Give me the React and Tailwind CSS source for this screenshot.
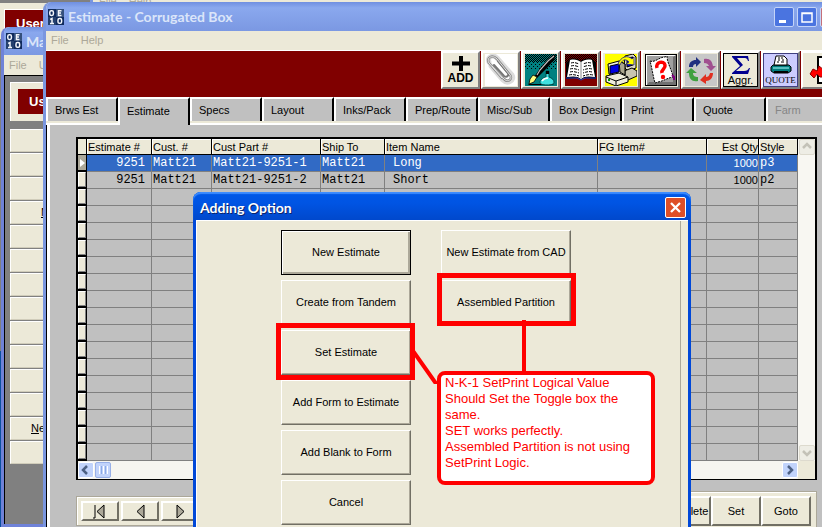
import React from "react";

const TABS = ["Brws Est", "Estimate", "Specs", "Layout", "Inks/Pack", "Prep/Route", "Misc/Sub", "Box Design", "Print", "Quote", "Farm"];

const COLUMNS = ["Estimate #", "Cust. #", "Cust Part #", "Ship To", "Item Name", "FG Item#", "Est Qty", "Style"];

const ROWS = [
  ["9251", "Matt21", "Matt21-9251-1", "Matt21", "Long", "", "1000", "p3"],
  ["9251", "Matt21", "Matt21-9251-2", "Matt21", "Short", "", "1000", "p2"],
];

const EMPTY_ROWS = Array.from({ length: 16 }, (_, i) => i);

function AppIcon() {
  return (
    <svg width="16" height="16" viewBox="0 0 16 16" className="shrink-0">
      <rect width="16" height="16" fill="#0f2a5c" />
      <rect x="8" width="8" height="8" fill="#35507c" />
      <rect y="8" width="8" height="8" fill="#24406e" />
      <g fill="none" stroke="#f4f6fa" strokeWidth="1.500">
        <rect x="1.800" y="1.800" width="3.600" height="4.600" rx="1.400" />
        <path d="M13.500 1.800h-3v4.600h3M10.500 4h2.500" />
        <path d="M2.200 10.500l1.800-1v5M2 14.400h4" />
        <rect x="10" y="9.600" width="3.600" height="4.700" rx="1.400" />
      </g>
    </svg>
  );
}

function ClipIcon() {
  return (
    <svg width="32" height="32" viewBox="0 0 32 32" className="bg-white">
      <g fill="none" strokeLinecap="round" strokeLinejoin="round">
        <path d="M6 12L18 26c5 5 12 0 9-5L12 4C8 0 2 3 4 8" stroke="#dcdcdc" strokeWidth="5" />
        <path d="M7 12l12 13c4 4 9 0 6-4L12 5C7 0 1 4 4 9l13 15" stroke="#8a8a8a" strokeWidth="2.500" />
        <path d="M13 7l9 11c3 3 0 6-3 4L9 11" stroke="#777" strokeWidth="2" />
        <path d="M7 12l12 13c4 4 9 0 6-4L12 5C7 0 1 4 4 9l13 15" stroke="#e4e4e4" strokeWidth="1" />
      </g>
    </svg>
  );
}

function PenIcon() {
  return (
    <svg width="32" height="32" viewBox="0 0 32 32">
      <defs>
        <pattern id="penDots" width="2" height="2" patternUnits="userSpaceOnUse">
          <rect width="1" height="1" fill="#000" />
          <rect x="1" y="1" width="1" height="1" fill="#000" />
        </pattern>
        <pattern id="penSparse" width="4" height="4" patternUnits="userSpaceOnUse">
          <rect width="1" height="1" fill="#000" />
          <rect x="2" y="2" width="1" height="1" fill="#000" />
        </pattern>
      </defs>
      <rect width="32" height="32" fill="#008080" />
      <rect width="32" height="8" fill="url(#penDots)" />
      <rect y="8" width="32" height="7" fill="url(#penSparse)" />
      <path d="M3 30h26l-2 1H4z" fill="#000" />
      <path d="M31 0L24 4 16 13 9 23l3 1L22 14l7-8z" fill="#000" />
      <path d="M29 2L23 7 15 16l-3 5" fill="none" stroke="#c0c0c0" strokeWidth="1.200" />
      <path d="M8 21l4 2-3 5-5 2 1-5z" fill="#ffff80" stroke="#000" strokeWidth="0.800" />
      <path d="M21 17h3v6c3 1 5 3 5 5s-2 3-7 3-7-1-7-3 3-4 6-5z" fill="#40e0e0" stroke="#004c4c" />
      <path d="M17 27c2-3 4-3 6-3" stroke="#fff" fill="none" strokeWidth="1.500" />
      <path d="M21 17h3v3h-3z" fill="#000" />
    </svg>
  );
}

function BookIcon() {
  return (
    <svg width="32" height="32" viewBox="0 0 32 32">
      <defs>
        <pattern id="bookDots" width="2" height="2" patternUnits="userSpaceOnUse">
          <rect width="1" height="1" fill="#000" />
          <rect x="1" y="1" width="1" height="1" fill="#000" />
        </pattern>
      </defs>
      <rect width="32" height="32" fill="#800000" />
      <rect width="32" height="9" fill="url(#bookDots)" />
      <path d="M1 25V9l4-4c5-1 8 0 11 2 3-2 6-3 11-2l4 4v16l-12-1-3 2-3-2z" fill="#000" />
      <path d="M1 24h11l4 2 4-2h11" stroke="#2040c0" fill="none" />
      <path d="M5 6c5-1 8 0 11 2 3-2 6-3 11-2l3 17c-6-1-11-1-14 2-3-3-8-3-14-2z" fill="#fff" />
      <path d="M16 8v16" stroke="#888" />
      <path
        d="M6 9c3-1 6 0 8 1M6 12c3-1 6 0 8 1M5 15c3-1 6 0 9 1M5 18c3-1 6 0 9 1M4 21c4-1 7 0 10 1M26 9c-3-1-6 0-8 1M26 12c-3-1-6 0-8 1M27 15c-3-1-6 0-9 1M27 18c-3-1-6 0-9 1M28 21c-4-1-7 0-10 1"
        fill="none"
        stroke="#000"
        strokeDasharray="3 1"
      />
    </svg>
  );
}

function ComputersIcon() {
  return (
    <svg width="32" height="32" viewBox="0 0 32 32">
      <rect width="32" height="32" fill="#ffff00" />
      <g stroke="#000">
        <path d="M20 2l8-2 3 3v11l-8 3-4-4z" fill="#dedbc8" />
        <path d="M22 4l6-1v8l-6 2z" fill="#0000e0" />
        <path d="M19 17l8-3 5 3v5l-9 4-5-3z" fill="#c8c4b0" />
        <path d="M3 10l11-3 6 3v11l-10 3-6-4z" fill="#f0eddc" />
        <path d="M5 12l9-2v8l-9 2z" fill="#0000e0" />
        <path d="M14 7l6 3v11l-5-3z" fill="#aaa58e" />
        <path d="M1 22l13-3 9 4v5l-12 4-10-4z" fill="#f0eddc" />
        <path d="M1 23l10 4 12-4M11 27v5" fill="none" />
      </g>
      <path d="M13 10C16 2 23 1 27 5l2-2v8l-8-1 3-2c-4-4-7-2-9 3z" fill="#ffff00" stroke="#202080" strokeWidth="0.800" />
      <rect x="3" y="25" width="2" height="2" fill="#00a000" />
    </svg>
  );
}

function HelpNoteIcon() {
  return (
    <svg width="32" height="32" viewBox="0 0 32 32">
      <rect width="32" height="32" fill="#000" />
      <path d="M1 1h30v30H1z" fill="#fff" />
      <path d="M2 2h29v29H2z" fill="#a0a0a0" />
      <path d="M2 31l2-3h24V3l3-2v30z" fill="#707070" />
      <path d="M5 7c5 2 9-4 15-4l2-1c0 7 5 14 6 21-6 1-9 4-15 5l-3 1C8 22 7 14 5 7z" fill="#fff" stroke="#000" strokeDasharray="2 1" />
      <path d="M27 21l2 2v3" stroke="#800080" fill="none" strokeWidth="2" />
      <path d="M12 14c-2-6 7-8 8-3 1 4-4 4-3 8" fill="none" stroke="#ff0000" strokeWidth="3.500" />
      <circle cx="18" cy="23" r="2.200" fill="#ff0000" />
    </svg>
  );
}

function RecycleIcon() {
  return (
    <svg width="32" height="32" viewBox="0 0 32 32">
      <rect width="32" height="32" fill="#c8c8c8" />
      <path d="M4 13c0-5 3-7 7-7V3l5 5-5 5v-3c-2 0-3 1-3 3z" fill="#203080" />
      <path d="M19 5c6-1 8 2 9 7h3l-5 5-5-5h3c-1-2-2-3-5-3z" fill="#a05090" />
      <path d="M28 19c0 5-3 8-7 8v3l-6-4 6-6v3c2 0 3-1 4-4z" fill="#e03020" />
      <path d="M13 27c-6 1-9-2-9-8H1l5-5 6 5H8c0 3 2 4 5 4z" fill="#40a040" />
    </svg>
  );
}

function PrinterIcon() {
  return (
    <svg width="22" height="20" viewBox="0 0 22 20" className="shrink-0">
      <path d="M3 10h16l2 2v4l-3 2H4l-3-2v-4z" fill="#007c7c" stroke="#000" />
      <path d="M4 10L6 1h8l3 3v6z" fill="#fff" stroke="#000" />
      <path d="M8 3h2M11 3h2M8 5h2M12 5h2M7 7h2M11 7h3" stroke="#000" />
      <path d="M3 13h16" stroke="#b0ffff" />
      <path d="M4 16h14v2H4z" fill="#000" />
    </svg>
  );
}

function ExitIcon() {
  return (
    <svg width="32" height="32" viewBox="0 0 32 32">
      <path d="M13 3h16v26H13z" fill="#fff" stroke="#000" strokeWidth="2" />
      <path d="M17 6h10v22H17z" fill="#8b5a2b" />
      <path d="M5 20l3-5 4 2 2-5 5 4v7h-4l-3-3-3 4z" fill="#ff0000" stroke="#900000" />
    </svg>
  );
}

function ToolButton({ label, children }) {
  return (
    <button
      aria-label={label}
      className="flex h-[38px] w-[39px] shrink-0 flex-col items-center justify-center border-2 border-t-white border-r-[#808080] border-b-[#808080] border-l-white bg-[#ece9d8] text-black"
    >
      {children}
    </button>
  );
}

function Toolbar() {
  return (
    <div className="flex h-[46px] items-start justify-end gap-px bg-[#800000] pr-[5px]">
      <ToolButton label="Add">
        <svg width="18" height="15" viewBox="0 0 18 15"><path d="M7 0h4v5.500h7v4h-7V15H7V9.500H0v-4h7z" /></svg>
        <span className="text-[12px] leading-[14px] font-bold">ADD</span>
      </ToolButton>
      <ToolButton label="Attach"><ClipIcon /></ToolButton>
      <ToolButton label="Notes"><PenIcon /></ToolButton>
      <ToolButton label="Book"><BookIcon /></ToolButton>
      <ToolButton label="Copy"><ComputersIcon /></ToolButton>
      <ToolButton label="Help note"><HelpNoteIcon /></ToolButton>
      <ToolButton label="Refresh"><RecycleIcon /></ToolButton>
      <ToolButton label="Aggregate">
        <span className="flex h-[34px] w-[35px] flex-col items-center border border-black pt-[2px]">
          <svg width="18" height="18" viewBox="0 0 18 18" className="shrink-0">
            <path d="M0 0h16l1 5h-1c-1-3-2-3-4-3H5l6 7-7 6h8c3 0 4-1 5-3h1l-2 6H0v-1l8-7-8-9z" fill="#000090" />
          </svg>
          <span className="text-[11px] leading-3">Aggr.</span>
        </span>
      </ToolButton>
      <ToolButton label="Print quote">
        <span className="flex h-[34px] w-[35px] flex-col items-center border border-[#404080] bg-[#ccccff] pt-px">
          <PrinterIcon />
          <span className="font-['Liberation_Serif',serif] text-[9px] leading-[11px]">QUOTE</span>
        </span>
      </ToolButton>
      <ToolButton label="Exit"><ExitIcon /></ToolButton>
    </div>
  );
}

function TabBar() {
  return (
    <div role="tablist" className="flex h-7 items-end border-b-2 border-white bg-[#ece9d8]">
      {TABS.map((tab) =>
        tab === "Estimate" ? (
          <button
            key={tab}
            role="tab"
            aria-selected="true"
            className="-mb-[2px] h-7 w-[72px] shrink-0 border-t-2 border-r-2 border-l-2 border-t-white border-r-black border-l-white bg-[#c0c0c0] pb-[2px] pl-[7px] text-left"
          >
            {tab}
          </button>
        ) : (
          <button
            key={tab}
            role="tab"
            aria-selected="false"
            disabled={tab === "Farm"}
            className="mb-[2px] h-6 w-[72px] shrink-0 overflow-hidden border-t-2 border-r-2 border-l-2 border-t-white border-r-black border-l-white bg-[#c0c0c0] pl-[7px] text-left whitespace-nowrap disabled:text-[#868686]"
          >
            {tab}
          </button>
        )
      )}
    </div>
  );
}

function RowMarker({ current }) {
  return (
    <td className="border-b-2 border-black bg-black p-0 pr-px">
      <div
        className={
          current
            ? "flex h-[15px] items-center justify-center bg-[#aca899]"
            : "h-[15px] border border-t-white border-r-[#808080] border-b-[#808080] border-l-white bg-[#ece9d8]"
        }
      >
        {current && <svg width="5" height="8" viewBox="0 0 5 8"><path d="M0 0l5 4-5 4z" fill="#fff" /></svg>}
      </div>
    </td>
  );
}

const CELL = "h-[17px] overflow-hidden border-r border-b border-[#808080] py-0 font-['Liberation_Mono',monospace] text-[12px] leading-4 whitespace-pre";

function Cell({ value, index }) {
  if (index === 0) return <td className={CELL + " pr-[6px] pl-0 text-right"}>{value}</td>;
  if (index === 4) return <td className={CELL + " pr-0 pl-[8px]"}>{value}</td>;
  if (index === 6)
    return <td className="h-[17px] border-r border-b border-[#808080] p-0 text-right leading-4">{value}</td>;
  return <td className={CELL + " pr-0 pl-px"}>{value}</td>;
}

function ScrollButton({ dir, disabled }) {
  const paths = { up: "M1 6l4-4 4 4", down: "M1 3l4 4 4-4", left: "M6 1L2 5l4 4", right: "M3 1l4 4-4 4" };
  return (
    <button
      aria-label={"Scroll " + dir}
      disabled={disabled}
      className="flex h-4 w-4 shrink-0 items-center justify-center rounded-xs border border-white bg-[#c1d3fb] text-[#4d6185] disabled:border-[#dddace] disabled:bg-[#eeede5] disabled:text-[#c4c2b8]"
    >
      <svg width="10" height="10" viewBox="0 0 10 10"><path d={paths[dir]} fill="none" stroke="currentColor" strokeWidth="2.500" /></svg>
    </button>
  );
}

function EstimateGrid() {
  return (
    <div className="border-2 border-b border-black">
      <div className="flex">
        <div className="min-w-0 flex-1">
          <table className="w-full table-fixed border-separate border-spacing-0">
            <colgroup>
              <col className="w-[9px]" />
              <col className="w-[65px]" />
              <col className="w-[60px]" />
              <col className="w-[109px]" />
              <col className="w-[64px]" />
              <col />
              <col className="w-[109px]" />
              <col className="w-[52px]" />
              <col className="w-[39px]" />
            </colgroup>
            <thead>
              <tr>
                <th aria-label="Row" className="border-r border-b border-black bg-[#ece9d8] p-0" />
                {COLUMNS.map((name) => (
                  <th
                    key={name}
                    className={
                      (name === "Est Qty" ? "text-right" : "text-left") +
                      " h-4 overflow-hidden border-r border-b border-black bg-[#ece9d8] p-0 pl-px text-[11px] leading-[14px] font-normal whitespace-nowrap shadow-[inset_1px_1px_0_#ffffff]"
                    }
                  >
                    {name}
                  </th>
                ))}
              </tr>
            </thead>
            <tbody>
              {ROWS.map((row, r) => (
                <tr key={row[2]} className={r === 0 ? "bg-[#316ac5] text-white" : "text-black"}>
                  <RowMarker current={r === 0} />
                  {row.map((value, i) => <Cell key={i} value={value} index={i} />)}
                </tr>
              ))}
              {EMPTY_ROWS.map((r) => (
                <tr key={r}>
                  <RowMarker />
                  {COLUMNS.map((name) => <td key={name} className="h-[17px] border-r border-b border-[#808080] p-0" />)}
                </tr>
              ))}
            </tbody>
          </table>
          <div className="flex h-[18px] items-center gap-px bg-[#f6f5f0]">
            <ScrollButton dir="left" />
            <div className="flex h-4 w-4 items-center justify-center gap-px rounded-xs border border-[#98b0e8] bg-[#c1d3fb]">
              <i className="h-2 w-px bg-white" />
              <i className="h-2 w-px bg-[#8caae6]" />
              <i className="h-2 w-px bg-white" />
              <i className="h-2 w-px bg-[#8caae6]" />
              <i className="h-2 w-px bg-white" />
            </div>
            <div className="flex-1" />
            <ScrollButton dir="right" />
          </div>
        </div>
        <div className="flex w-[17px] flex-col bg-[#ece9d8]">
          <div className="flex flex-1 flex-col items-center justify-between bg-[#f8f7f2]">
            <ScrollButton dir="up" disabled />
            <ScrollButton dir="down" disabled />
          </div>
          <div className="h-[18px]" />
        </div>
      </div>
    </div>
  );
}

const RAISED = "border-t-white border-r-[#716f64] border-b-[#716f64] border-l-white bg-[#ece9d8]";

function NavButton({ label, children }) {
  return (
    <button aria-label={label} className={"flex h-5 w-[38px] items-center justify-center border-2 " + RAISED}>
      <svg width="14" height="15" viewBox="0 0 14 15" fill="#aca899" stroke="#000">{children}</svg>
    </button>
  );
}

function RecordBar() {
  return (
    <div className="flex items-start justify-between">
      <div className="mt-[5px] flex h-[30px] w-[300px] items-center gap-[2px] border border-[#aca899] bg-[#ece9d8] pl-1 shadow-[inset_1px_1px_0_#ffffff]">
        <NavButton label="First"><path d="M2 1v13M0 14h2" /><path d="M11 1v13L4 7.500z" /></NavButton>
        <NavButton label="Previous"><path d="M11 1v13L4 7.500z" /></NavButton>
        <NavButton label="Next"><path d="M4 1v13l7-6.500z" /></NavButton>
      </div>
      <div className="flex h-[40px] items-start border border-[#aca899] bg-[#ece9d8] pt-1 pr-[5px] shadow-[inset_1px_1px_0_#ffffff]">
        {["Delete", "Set", "Goto"].map((name) => (
          <button key={name} className={"h-[30px] w-[50px] border-2 text-[11px] " + (name === "Delete" ? "pl-[13px] " : "") + RAISED}>{name}</button>
        ))}
      </div>
    </div>
  );
}

const TITLE_FONT = "font-['Lato',sans-serif] text-[14px] font-bold";

function EstimateWindow() {
  return (
    <section className="absolute top-[2px] -right-[23px] -bottom-2 left-[43px] flex flex-col overflow-hidden rounded-t-lg border-l-[3px] border-[#7a96df] bg-[#ece9d8]">
      <header className="flex h-[29px] shrink-0 items-center bg-linear-to-b from-[#6f8fe0] via-[#8aa8ee] via-20% to-[#7b98e2] pr-[5px] pl-[2px]">
        <AppIcon />
        <h1 className={"ml-1 flex-1 text-[#dbe5f9] " + TITLE_FONT}>Estimate - Corrugated Box</h1>
        <div className="flex gap-[3px]">
          <button aria-label="Minimize" className="h-5 w-5 rounded-xs border border-[#c4d4f8] bg-[#4a74e0]">
            <svg width="18" height="18" viewBox="0 0 18 18"><path d="M4 12h7v3H4z" fill="#fff" /></svg>
          </button>
          <button aria-label="Maximize" className="h-5 w-5 rounded-xs border border-[#c4d4f8] bg-[#4a74e0]">
            <svg width="18" height="18" viewBox="0 0 18 18"><path d="M4 5h10v9H4zM4 5.500h10" fill="none" stroke="#fff" strokeWidth="1.500" /></svg>
          </button>
          <button aria-label="Close" className="h-5 w-5 rounded-xs border border-[#c4d4f8] bg-[#c4707a]" />
        </div>
      </header>
      <nav className="flex h-[20px] shrink-0 items-center gap-3 border-b border-white pl-[5px] text-[11px] text-[#aca899]">
        <button>File</button>
        <button>Help</button>
      </nav>
      <Toolbar />
      <TabBar />
      <div className="min-h-0 flex-1 border-l border-black">
        <div className="h-full border-l-[3px] border-white bg-[#c0c0c0] pt-[12px] pr-[28px] pl-[26px]">
          <EstimateGrid />
          <div className="h-[11px]" />
          <RecordBar />
        </div>
      </div>
    </section>
  );
}

function MenuButton({ children }) {
  return (
    <button className="h-[23px] w-full shrink-0 border-t border-b border-l border-t-white border-b-[#d0ccba] border-l-white bg-[#ece9d8] pr-1 text-left">
      {children}
    </button>
  );
}

function MainMenuWindow() {
  return (
    <section className="absolute top-[27px] bottom-0 left-[1px] flex w-[49px] flex-col rounded-tl-lg border-b-[3px] border-l-[3px] border-[#6f82d8] bg-[#ece9d8]">
      <header className="flex h-7 shrink-0 items-center gap-1 rounded-tl-md bg-linear-to-b from-[#6f8fe0] via-[#8aa8ee] via-20% to-[#7b98e2] pl-[2px]">
        <AppIcon />
        <h2 className={"text-[#dbe5f9] " + TITLE_FONT}>Ma</h2>
      </header>
      <nav className="flex h-5 shrink-0 items-center gap-3 pl-[5px] text-[11px] text-[#aca899]">
        <button>File</button>
        <button>U</button>
      </nav>
      <div className="flex flex-1 flex-col border-t border-l border-black bg-[#808080] pt-[6px] pl-[5px]">
        <div className="h-[39px] shrink-0 border-t border-l border-white bg-[#ece9d8] pt-[6px] pl-[7px]">
          <div className="h-[25px] bg-[#800000] pl-[11px] text-[13px] leading-[25px] font-bold text-white">Us</div>
        </div>
        <div className="mt-[8px] flex flex-col gap-px">
          <MenuButton />
          <MenuButton />
          <MenuButton />
          <MenuButton><u className="pl-[30px]">M</u></MenuButton>
          <MenuButton />
          <MenuButton />
          <MenuButton />
          <MenuButton />
          <MenuButton />
          <MenuButton />
          <MenuButton />
          <MenuButton />
          <MenuButton><span className="pl-[20px]"><u>N</u>e</span></MenuButton>
          <MenuButton />
        </div>
      </div>
    </section>
  );
}

function BackWindow() {
  return (
    <section className="absolute inset-0 bg-[#ece9d8]">
      <div className="flex h-[3px]">
        <div className="w-[90px] bg-[#808080]" />
        <div className="w-[3px] bg-[#7a96df]" />
        <div className="flex gap-3 pl-[6px] text-[11px] leading-[3px] text-[#aca899]">
          <span>File</span>
          <span>Help</span>
        </div>
      </div>
      <div className="mt-[6px] ml-[4px] h-[30px] w-[50px] border-t border-l border-white bg-[#800000] pt-[6px] pl-[11px] text-[13px] leading-4 font-bold text-white">
        User
      </div>
      <div className="h-[312px] w-[2px] bg-[#808080]" />
      <div className="h-full w-[2px] bg-[#0a50a0]" />
    </section>
  );
}

function OptionButton({ children, isDefault }) {
  return (
    <button
      className={
        isDefault
          ? "h-[45px] w-[130px] border border-black bg-[#ece9d8] shadow-[inset_1px_1px_0_#ffffff,inset_-2px_-2px_0_#aca899]"
          : "h-[45px] w-[130px] border border-t-white border-r-[#716f64] border-b-[#716f64] border-l-white bg-[#ece9d8] shadow-[inset_-1px_-1px_0_#aca899]"
      }
    >
      {children}
    </button>
  );
}

function Annotations() {
  return (
    <>
      <div className="absolute top-[131px] left-[80px] h-[57px] w-[139px] border-[5px] border-[#ff0000]" />
      <div className="absolute top-[81px] left-[241px] h-[53px] w-[139px] border-[5px] border-[#ff0000]" />
      <svg className="absolute top-[128px] left-[217px]" width="120" height="64" viewBox="0 0 120 64">
        <path d="M0 31L24 65M111 0v56" fill="none" stroke="#ff0000" strokeWidth="4" />
      </svg>
      <p className="absolute top-[179px] left-[241px] h-[114px] w-[218px] rounded-lg border-4 border-[#ff0000] bg-white pl-1 text-[13px] leading-4 whitespace-pre-line text-[#ff0000]">
        {"N-K-1 SetPrint Logical Value\nShould Set the Toggle box the\nsame.\nSET works perfectly.\nAssembled Partition is not using\nSetPrint Logic."}
      </p>
    </>
  );
}

function AddingOptionDialog() {
  return (
    <section
      role="dialog"
      aria-label="Adding Option"
      className="absolute top-[192px] -bottom-5 left-[193px] flex w-[498px] flex-col rounded-t-lg border-r-[3px] border-l-[3px] border-[#0048d8] bg-[#ece9d8]"
    >
      <header className="-mx-[3px] flex h-[28px] shrink-0 items-center justify-between rounded-t-lg bg-linear-to-b from-[#0058e8] via-[#0054e3] via-40% to-[#0048cc] pt-[2px] pr-[5px] pl-[7px] shadow-[inset_0_2px_1px_#3c8cff]">
        <h2 className={"text-white [text-shadow:1px_1px_0_#0a246a] " + TITLE_FONT}>Adding Option</h2>
        <button aria-label="Close" className="flex h-[21px] w-[21px] items-center justify-center rounded-xs border border-white bg-[#de4f27]">
          <svg width="13" height="13" viewBox="0 0 13 13"><path d="M2 2l9 9M11 2l-9 9" stroke="#fff" strokeWidth="2.300" /></svg>
        </button>
      </header>
      <div className="relative flex-1 border-t border-l border-white pr-[7px]">
        <div className="h-full border-r border-[#aca899]">
          <div className="grid w-fit grid-cols-2 gap-x-[30px] gap-y-[5px] pt-[9px] pl-[84px]">
            <OptionButton isDefault>New Estimate</OptionButton>
            <OptionButton>New Estimate from CAD</OptionButton>
            <OptionButton>Create from Tandem</OptionButton>
            <OptionButton>Assembled Partition</OptionButton>
            <div className="col-span-2 flex flex-col gap-[5px]">
              <OptionButton>Set Estimate</OptionButton>
              <OptionButton>Add Form to Estimate</OptionButton>
              <OptionButton>Add Blank to Form</OptionButton>
              <OptionButton>Cancel</OptionButton>
            </div>
          </div>
        </div>
      </div>
      <Annotations />
    </section>
  );
}

export default function App() {
  return (
    <main className="relative h-screen w-full overflow-hidden font-['Liberation_Sans',Arial,sans-serif] text-[11px] text-black">
      <BackWindow />
      <MainMenuWindow />
      <EstimateWindow />
      <AddingOptionDialog />
    </main>
  );
}
